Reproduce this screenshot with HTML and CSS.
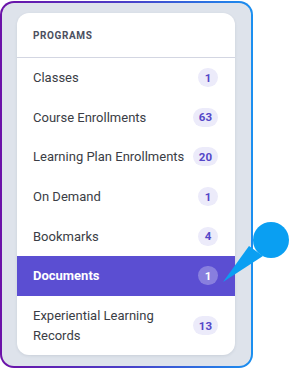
FILE: index.html
```html
<!DOCTYPE html>
<html>
<head>
<meta charset="utf-8">
<link rel="stylesheet" href="styles.css">
</head>
<body>
<div class="frame">
  <div class="card">
    <div class="header">PROGRAMS</div>
    <ul class="list">
      <li class="row"><span class="label">Classes</span><span class="badge">1</span></li>
      <li class="row"><span class="label">Course Enrollments</span><span class="badge">63</span></li>
      <li class="row"><span class="label">Learning Plan Enrollments</span><span class="badge">20</span></li>
      <li class="row"><span class="label">On Demand</span><span class="badge">1</span></li>
      <li class="row"><span class="label">Bookmarks</span><span class="badge">4</span></li>
      <li class="row active"><span class="label">Documents</span><span class="badge">1</span></li>
      <li class="row tall"><span class="label">Experiential Learning<br>Records</span><span class="badge">13</span></li>
    </ul>
  </div>
</div>
<svg class="pointer" width="80" height="80" viewBox="0 0 80 80">
  <circle cx="57" cy="26" r="18" fill="#0a9ff2"/>
  <polygon points="35,32 49,42 9,68" fill="#0a9ff2"/>
</svg>
</body>
</html>
```
FILE: styles.css
```css
html, body {
  margin: 0;
  padding: 0;
  background: #ffffff;
}
body {
  position: relative;
  width: 290px;
  height: 369px;
  overflow: hidden;
  font-family: Roboto, "Liberation Sans", sans-serif;
}
.frame {
  box-sizing: border-box;
  margin-top: 1px;
  width: 253px;
  height: 367px;
  border: 2px solid transparent;
  border-radius: 14px;
  background:
    linear-gradient(#dee3eb, #dee3eb) padding-box,
    linear-gradient(90deg, #6c12a8 0%, #4a3fc8 50%, #1a8ff0 100%) border-box;
  padding: 10px 0 0 15px;
}
.card {
  box-sizing: border-box;
  width: 218px;
  height: 342px;
  background: #ffffff;
  border-radius: 12px;
  box-shadow: 0 1px 3px rgba(60, 70, 100, 0.12);
  overflow: hidden;
}
.header {
  height: 44px;
  border-bottom: 1px solid #d3d6e2;
  display: flex;
  align-items: center;
  padding: 0 16px;
  font-size: 10px;
  font-weight: 700;
  letter-spacing: 0.6px;
  color: #4b5060;
}
.list {
  list-style: none;
  margin: 0;
  padding: 0;
}
.row {
  height: 39.6px;
  display: flex;
  align-items: center;
  justify-content: space-between;
  padding: 0 17px 0 16px;
  font-size: 13px;
  color: #3a3d45;
}
.row.tall {
  height: 60px;
  line-height: 20px;
}
.row.active {
  background: #5b4ed2;
  color: #ffffff;
  font-weight: 700;
}
.badge {
  min-width: 20px;
  height: 19px;
  padding: 0 6px;
  box-sizing: border-box;
  border-radius: 10px;
  background: #ecebfa;
  color: #5447c8;
  font-size: 11.5px;
  font-weight: 700;
  display: flex;
  align-items: center;
  justify-content: center;
}
.row.active .badge {
  background: rgba(255, 255, 255, 0.28);
  color: #ffffff;
}
.pointer {
  position: absolute;
  left: 214px;
  top: 214px;
}
```
